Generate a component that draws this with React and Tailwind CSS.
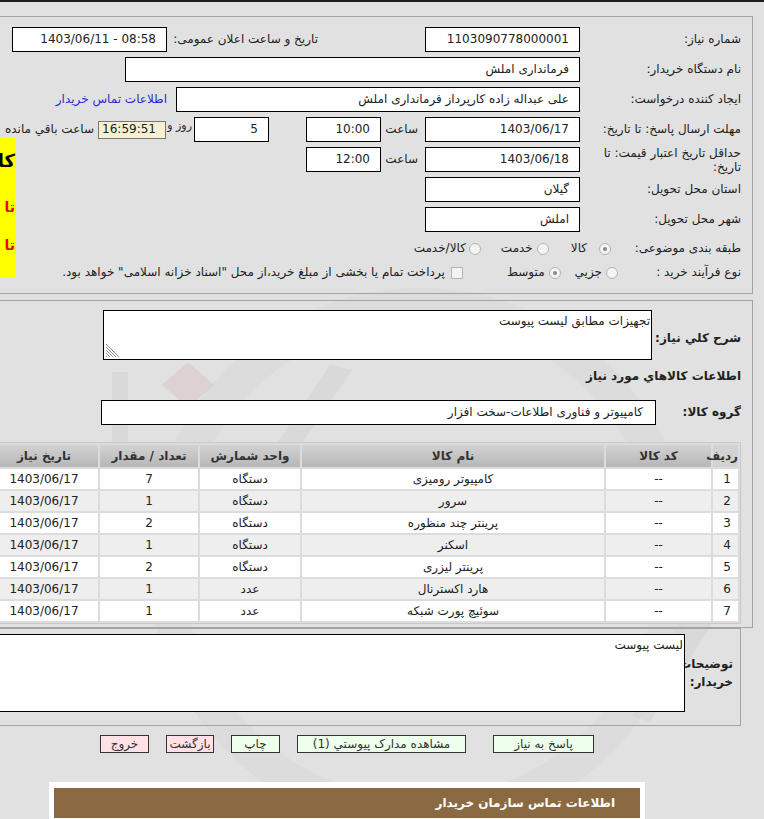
import React from 'react'

const items = [
    { name: 'کامپیوتر رومیزی', unit: 'دستگاه', qty: 7 },
    { name: 'سرور', unit: 'دستگاه', qty: 1 },
    { name: 'پرینتر چند منظوره', unit: 'دستگاه', qty: 2 },
    { name: 'اسکنر', unit: 'دستگاه', qty: 1 },
    { name: 'پرینتر لیزری', unit: 'دستگاه', qty: 2 },
    { name: 'هارد اکسترنال', unit: 'عدد', qty: 1 },
    { name: 'سوئیچ پورت شبکه', unit: 'عدد', qty: 1 },
]

function Field({ w, children, ltr }) {
    return (
        <div className={`flex h-[25px] shrink-0 items-center whitespace-nowrap border border-black bg-white px-[10px] ${w}`}>
            <span dir={ltr ? 'ltr' : undefined}>{children}</span>
        </div>
    )
}

function Label({ w, children }) {
    return <div className={`shrink-0 whitespace-nowrap ${w}`}>{children}</div>
}

function Radio({ checked }) {
    return (
        <span className="flex h-[12px] w-[12px] shrink-0 items-center justify-center rounded-full border border-[#b4b4b4] bg-[#f3f3f3]">
            {checked && <span className="h-[4px] w-[4px] rounded-full bg-[#8a8a8a]" />}
        </span>
    )
}

function Btn({ w, tone, children }) {
    const bg = tone === 'red' ? 'bg-[#ffe1e6]' : 'bg-[#eeffee]'
    return (
        <div className={`flex h-[18px] shrink-0 items-center justify-center whitespace-nowrap border border-[#333] text-[12px] text-[#333] ${w} ${bg}`}>
            {children}
        </div>
    )
}

function Watermark() {
    return (
        <svg className="pointer-events-none absolute left-0 top-0" width="764" height="819">
            <circle cx="420" cy="560" r="255" fill="none" stroke="#d8d8d8" strokeWidth="34" opacity="0.6" />
            <path d="M162 385 L188 362 L214 385 L188 408 Z" fill="#dccbcb" opacity="0.7" />
            <path d="M112 372 L128 372 L128 450 L112 450 Z" fill="#d2d2d2" opacity="0.6" />
            <path d="M330 365 L352 370 L250 520 L228 515 Z" fill="#d4d4d4" opacity="0.6" />
            <path d="M680 620 L712 624 L650 722 L632 716 Z" fill="#d4d4d4" opacity="0.6" />
        </svg>
    )
}

const th = 'bg-gradient-to-b from-[#d2d2d2] to-[#b7b7b7] font-bold whitespace-nowrap'

function App() {
    return (
        <div dir="rtl" className="relative h-[819px] w-full overflow-hidden bg-[#e1e1e1] font-['DejaVu_Sans',sans-serif] text-[12px] leading-[15px] text-[#222]">
            <Watermark />
            <div className="relative">
                <div className="h-[2px] bg-[#1c1c1c]" />

                {/* main info */}
                <div className="mr-[11px] mt-[14px] h-[278px] w-[1000px] border border-[#a3a3a3] pr-[11px] pt-[10px]">
                    <div className="flex flex-col gap-[5px]">
                        <div className="flex h-[25px] items-center">
                            <Label w="w-[161px]">شماره نیاز:</Label>
                            <Field w="w-[155px]">1103090778000001</Field>
                            <Label w="w-[151px] mr-[107px]">تاریخ و ساعت اعلان عمومی:</Label>
                            <Field w="w-[155px]" ltr>1403/06/11 - 08:58</Field>
                        </div>
                        <div className="flex h-[25px] items-center">
                            <Label w="w-[161px]">نام دستگاه خریدار:</Label>
                            <Field w="w-[455px]">فرمانداری املش</Field>
                        </div>
                        <div className="flex h-[25px] items-center">
                            <Label w="w-[161px]">ایجاد کننده درخواست:</Label>
                            <Field w="w-[404px]">علی عبداله زاده کارپرداز فرمانداری املش</Field>
                            <span className="mr-[9px] whitespace-nowrap text-[#2b2bd4]">اطلاعات تماس خریدار</span>
                        </div>
                        <div className="flex h-[25px] items-center">
                            <Label w="w-[161px]">مهلت ارسال پاسخ: تا تاریخ:</Label>
                            <Field w="w-[155px]">1403/06/17</Field>
                            <span className="mr-[7px] w-[37px] shrink-0">ساعت</span>
                            <Field w="w-[75px]">10:00</Field>
                            <Field w="w-[75px] mr-[37px]">5</Field>
                            <span className="mr-[2px] w-[26px] shrink-0 self-start whitespace-nowrap pt-[1px] text-[11px]">روز و</span>
                            <div className="flex h-[18px] w-[68px] shrink-0 items-center border border-[#777] bg-[#f6f1d3] px-[9px]">16:59:51</div>
                            <span className="mr-[4px] shrink-0 whitespace-nowrap">ساعت باقي مانده</span>
                        </div>
                        <div className="flex items-start">
                            <div className="flex w-[725px] shrink-0 flex-col gap-[5px]">
                                <div className="flex h-[25px] items-center">
                                    <Label w="w-[161px] leading-[14px]">حداقل تاریخ اعتبار قیمت: تا<br />تاریخ:</Label>
                                    <Field w="w-[155px]">1403/06/18</Field>
                                    <span className="mr-[7px] w-[37px] shrink-0">ساعت</span>
                                    <Field w="w-[75px]">12:00</Field>
                                </div>
                                <div className="flex h-[25px] items-center">
                                    <Label w="w-[161px]">استان محل تحویل:</Label>
                                    <Field w="w-[155px]">گیلان</Field>
                                </div>
                                <div className="flex h-[25px] items-center">
                                    <Label w="w-[161px]">شهر محل تحویل:</Label>
                                    <Field w="w-[155px]">املش</Field>
                                </div>
                                <div className="flex h-[19px] items-end">
                                    <Label w="w-[130px]">طبقه بندی موضوعی:</Label>
                                    <div className="flex items-center whitespace-nowrap">
                                        <Radio checked />
                                        <span className="mr-[12px]">کالا</span>
                                        <span className="mr-[22px]"><Radio /></span>
                                        <span className="mr-[4px]">خدمت</span>
                                        <span className="mr-[20px]"><Radio /></span>
                                        <span className="mr-[3px]">کالا/خدمت</span>
                                    </div>
                                </div>
                                <div className="flex h-[19px] items-end">
                                    <Label w="w-[123px]">نوع فرآیند خرید :</Label>
                                    <div className="flex items-center whitespace-nowrap">
                                        <Radio />
                                        <span className="mr-[4px]">جزیي</span>
                                        <span className="mr-[14px]"><Radio checked /></span>
                                        <span className="mr-[4px]">متوسط</span>
                                        <span className="mr-[44px] h-[12px] w-[12px] shrink-0 border border-[#b4b4b4] bg-[#f3f3f3]" />
                                        <span className="mr-[6px]">پرداخت تمام یا بخشی از مبلغ خرید،از محل "اسناد خزانه اسلامی" خواهد بود.</span>
                                    </div>
                                </div>
                            </div>
                            <div className="-mt-[9px] flex h-[139px] w-[200px] shrink-0 flex-col whitespace-nowrap bg-[#ffff00] pr-[1px] pt-[11px] font-bold">
                                <span className="text-[18px] leading-[24px] text-black">کاربر گرامی</span>
                                <span className="mt-[24px] text-[14px] leading-[20px] text-[#e01010]">تا پایان مهلت</span>
                                <span className="mt-[18px] text-[14px] leading-[20px] text-[#e01010]">تا اعلام نتایج</span>
                            </div>
                        </div>
                    </div>
                </div>

                {/* description + items */}
                <div className="mr-[11px] mt-[6px] h-[328px] w-[1000px] border border-[#a3a3a3] pr-[11px] pt-[9px]">
                    <div className="flex items-center">
                        <div className="w-[89px] shrink-0 whitespace-nowrap pt-[6px] font-bold">شرح کلي نياز:</div>
                        <div className="relative h-[50px] w-[549px] shrink-0 border border-black bg-white pr-[1px] pt-[3px]">
                            تجهیزات مطابق لیست پیوست
                            <svg className="absolute bottom-[1px] left-[1px]" width="14" height="14">
                                <path d="M1 3 L11 13 M1 6 L8 13 M1 9 L5 13 M1 12 L2 13 M1 0 L14 13" stroke="#8a8a8a" strokeWidth="1" />
                            </svg>
                        </div>
                    </div>
                    <div className="mt-[8px] whitespace-nowrap font-bold leading-[16px]">اطلاعات کالاهاي مورد نياز</div>
                    <div className="mt-[16px] flex items-center">
                        <div className="w-[85px] shrink-0 whitespace-nowrap font-bold">گروه کالا:</div>
                        <div className="flex h-[25px] w-[555px] shrink-0 items-center border border-black bg-white pr-[12px]">
                            کامپیوتر و فناوری اطلاعات-سخت افزار
                        </div>
                    </div>
                    <div className="mt-[17px] w-[754px] border border-[#c9c9c9] bg-[#dcdcdc]">
                        <table className="w-[752px] table-fixed border-separate border-spacing-[2px] text-[12px]">
                            <thead>
                                <tr className="h-[22px] text-[#333]">
                                    <th className="w-[25px] whitespace-nowrap bg-[#d2d2d2] font-bold">ردیف</th>
                                    <th className={`w-[105px] ${th}`}>کد کالا</th>
                                    <th className={`w-[302px] ${th}`}>نام کالا</th>
                                    <th className={`w-[100px] ${th}`}>واحد شمارش</th>
                                    <th className={`w-[98px] ${th}`}>تعداد / مقدار</th>
                                    <th className={`w-[108px] ${th}`}>تاریخ نیاز</th>
                                </tr>
                            </thead>
                            <tbody>
                                {items.map((it, i) => (
                                    <tr key={i} className={`h-[20px] ${i % 2 ? 'bg-[#eeeeee]' : 'bg-white'}`}>
                                        <td className="pr-[7px] text-right">{i + 1}</td>
                                        <td className="text-center">--</td>
                                        <td className="text-center">{it.name}</td>
                                        <td className="text-center">{it.unit}</td>
                                        <td className="text-center">{it.qty}</td>
                                        <td className="text-center">1403/06/17</td>
                                    </tr>
                                ))}
                            </tbody>
                        </table>
                    </div>
                </div>

                {/* buyer notes */}
                <div className="mr-[23px] h-[98px] w-[1000px] border border-[#a3a3a3] pr-[7px] pt-[5px]">
                    <div className="flex items-center">
                        <div className="w-[48px] shrink-0 whitespace-nowrap font-bold leading-[18px]">توضیحات<br />خریدار:</div>
                        <div className="h-[78px] w-[800px] shrink-0 border border-black bg-white pr-[1px] pt-[3px]">لیست پیوست</div>
                    </div>
                </div>

                {/* actions */}
                <div className="mr-[170px] mt-[9px] flex gap-[17px]">
                    <Btn w="w-[101px] ml-[10px]">پاسخ به نیاز</Btn>
                    <Btn w="w-[169px]">مشاهده مدارک پیوستي (1)</Btn>
                    <Btn w="w-[49px]">چاپ</Btn>
                    <Btn w="w-[48px]" tone="red">بازگشت</Btn>
                    <Btn w="w-[49px]" tone="red">خروج</Btn>
                </div>

                <div className="mr-[119px] mt-[29px] w-[596px] bg-white px-[5px] pb-[5px] pt-[6px]">
                    <div className="flex h-[30px] items-center bg-[#8b6a42] pr-[25px] text-[12px] font-bold text-white">
                        اطلاعات تماس سازمان خریدار
                    </div>
                </div>
            </div>
        </div>
    )
}

export default App
